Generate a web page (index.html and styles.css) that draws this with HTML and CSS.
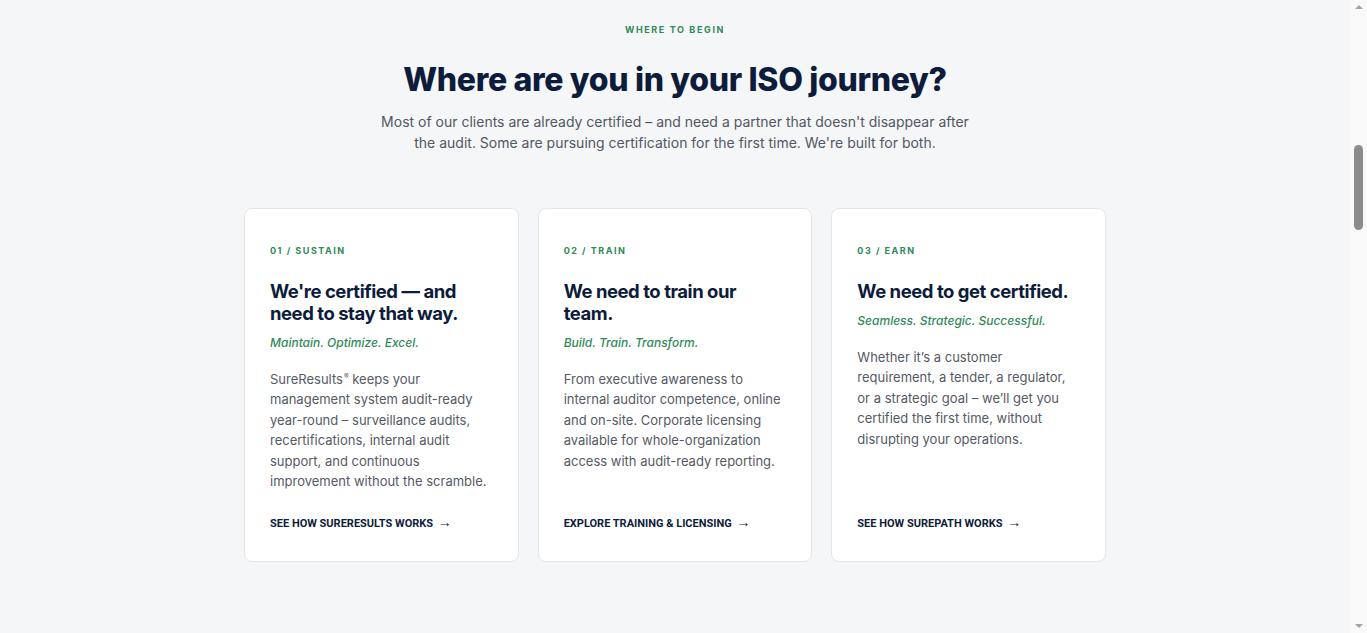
FILE: index.html
```html
<!DOCTYPE html>
<html lang="en">
<head>
  <meta charset="UTF-8">
  <meta name="viewport" content="width=device-width, initial-scale=1.0">
  <title>Where to Begin</title>
  <link rel="stylesheet" href="styles.css">
</head>
<body>
  <div class="page">
    <main class="content">
      <section class="journey">
        <p class="eyebrow">Where to begin</p>
        <h1>Where are you in your ISO journey?</h1>
        <p class="intro">Most of our clients are already certified – and need a partner that doesn't disappear after the audit. Some are pursuing certification for the first time. We're built for both.</p>

        <div class="cards">
          <article class="card">
            <p class="card-label">01 / Sustain</p>
            <h3>We're certified — and need to stay that way.</h3>
            <p class="tagline">Maintain. Optimize. Excel.</p>
            <p class="card-text">SureResults<span class="reg">®</span> keeps your management system audit-ready year-round – surveillance audits, recertifications, internal audit support, and continuous improvement without the scramble.</p>
            <a class="card-link" href="#">See how SureResults works <span>→</span></a>
          </article>
          <article class="card">
            <p class="card-label">02 / Train</p>
            <h3>We need to train our team.</h3>
            <p class="tagline">Build. Train. Transform.</p>
            <p class="card-text">From executive awareness to internal auditor competence, online and on-site. Corporate licensing available for whole-organization access with audit-ready reporting.</p>
            <a class="card-link" href="#">Explore training &amp; licensing <span>→</span></a>
          </article>
          <article class="card">
            <p class="card-label">03 / Earn</p>
            <h3>We need to get certified.</h3>
            <p class="tagline">Seamless. Strategic. Successful.</p>
            <p class="card-text">Whether it’s a customer requirement, a tender, a regulator, or a strategic goal – we’ll get you certified the first time, without disrupting your operations.</p>
            <a class="card-link" href="#">See how SurePath works <span>→</span></a>
          </article>
        </div>
      </section>
    </main>
    <div class="rail">
      <span class="arrow-up"></span>
      <span class="thumb"></span>
      <span class="arrow-down"></span>
    </div>
  </div>
</body>
</html>
```

FILE: styles.css
```css
body {
  margin: 0;
  font-family: Inter, "Noto Sans", sans-serif;
  background: #f5f6f8;
  color: #0d1c3b;
  overflow: hidden;
}
.page {
  display: flex;
  height: 633px;
}
.content {
  flex: 1;
}
.journey {
  padding-top: 24px;
  text-align: center;
}
.eyebrow {
  margin: 0;
  font-size: 9px;
  line-height: 12px;
  font-weight: 700;
  letter-spacing: 0.18em;
  text-transform: uppercase;
  color: #2e8a58;
}
h1 {
  margin: 24px 0 0;
  font-size: 32px;
  line-height: 40px;
  font-weight: 800;
  letter-spacing: -0.01em;
  color: #0d1c3b;
}
.intro {
  max-width: 600px;
  margin: 11px auto 0;
  font-size: 14px;
  line-height: 21px;
  color: #515763;
}
.cards {
  display: grid;
  grid-template-columns: repeat(3, 1fr);
  gap: 19px;
  width: 862px;
  margin: 55px auto 0;
  text-align: left;
}
.card {
  display: flex;
  flex-direction: column;
  height: 354px;
  box-sizing: border-box;
  padding: 36px 25px 30px;
  background: #fff;
  border: 1px solid #e3e6ea;
  border-radius: 8px;
}
.card-label {
  margin: 0;
  font-size: 9px;
  line-height: 12px;
  font-weight: 700;
  letter-spacing: 0.17em;
  text-transform: uppercase;
  color: #2e8a58;
}
.card h3 {
  margin: 23px 0 0;
  font-size: 18.5px;
  line-height: 22px;
  font-weight: 700;
  letter-spacing: -0.025em;
}
.tagline {
  margin: 10px 0 0;
  font-size: 12px;
  line-height: 18px;
  font-style: italic;
  font-weight: 500;
  color: #2e8a58;
}
.card-text {
  margin: 17px 0 0;
  font-size: 13px;
  line-height: 20.4px;
  color: #555a64;
}
.reg {
  font-size: 7px;
  line-height: 0;
  vertical-align: 5px;
  margin-left: 1px;
}
.card-link {
  margin-top: auto;
  font-family: Roboto, sans-serif;
  font-size: 11px;
  line-height: 14px;
  font-weight: 700;
  text-transform: uppercase;
  text-decoration: none;
  color: #0d1c3b;
}
.card-link span {
  margin-left: 2px;
  font-size: 14px;
}
.rail {
  width: 17px;
  display: flex;
  flex-direction: column;
  align-items: center;
  background: #f9f9f9;
}
.arrow-up {
  margin-top: 5px;
  border-left: 4px solid transparent;
  border-right: 4px solid transparent;
  border-bottom: 4px solid #a3a3a3;
}
.thumb {
  width: 9px;
  height: 85px;
  margin-top: 136px;
  border-radius: 5px;
  background: #8c8c8c;
}
.arrow-down {
  margin-top: auto;
  margin-bottom: 5px;
  border-left: 4px solid transparent;
  border-right: 4px solid transparent;
  border-top: 4px solid #a3a3a3;
}
```
